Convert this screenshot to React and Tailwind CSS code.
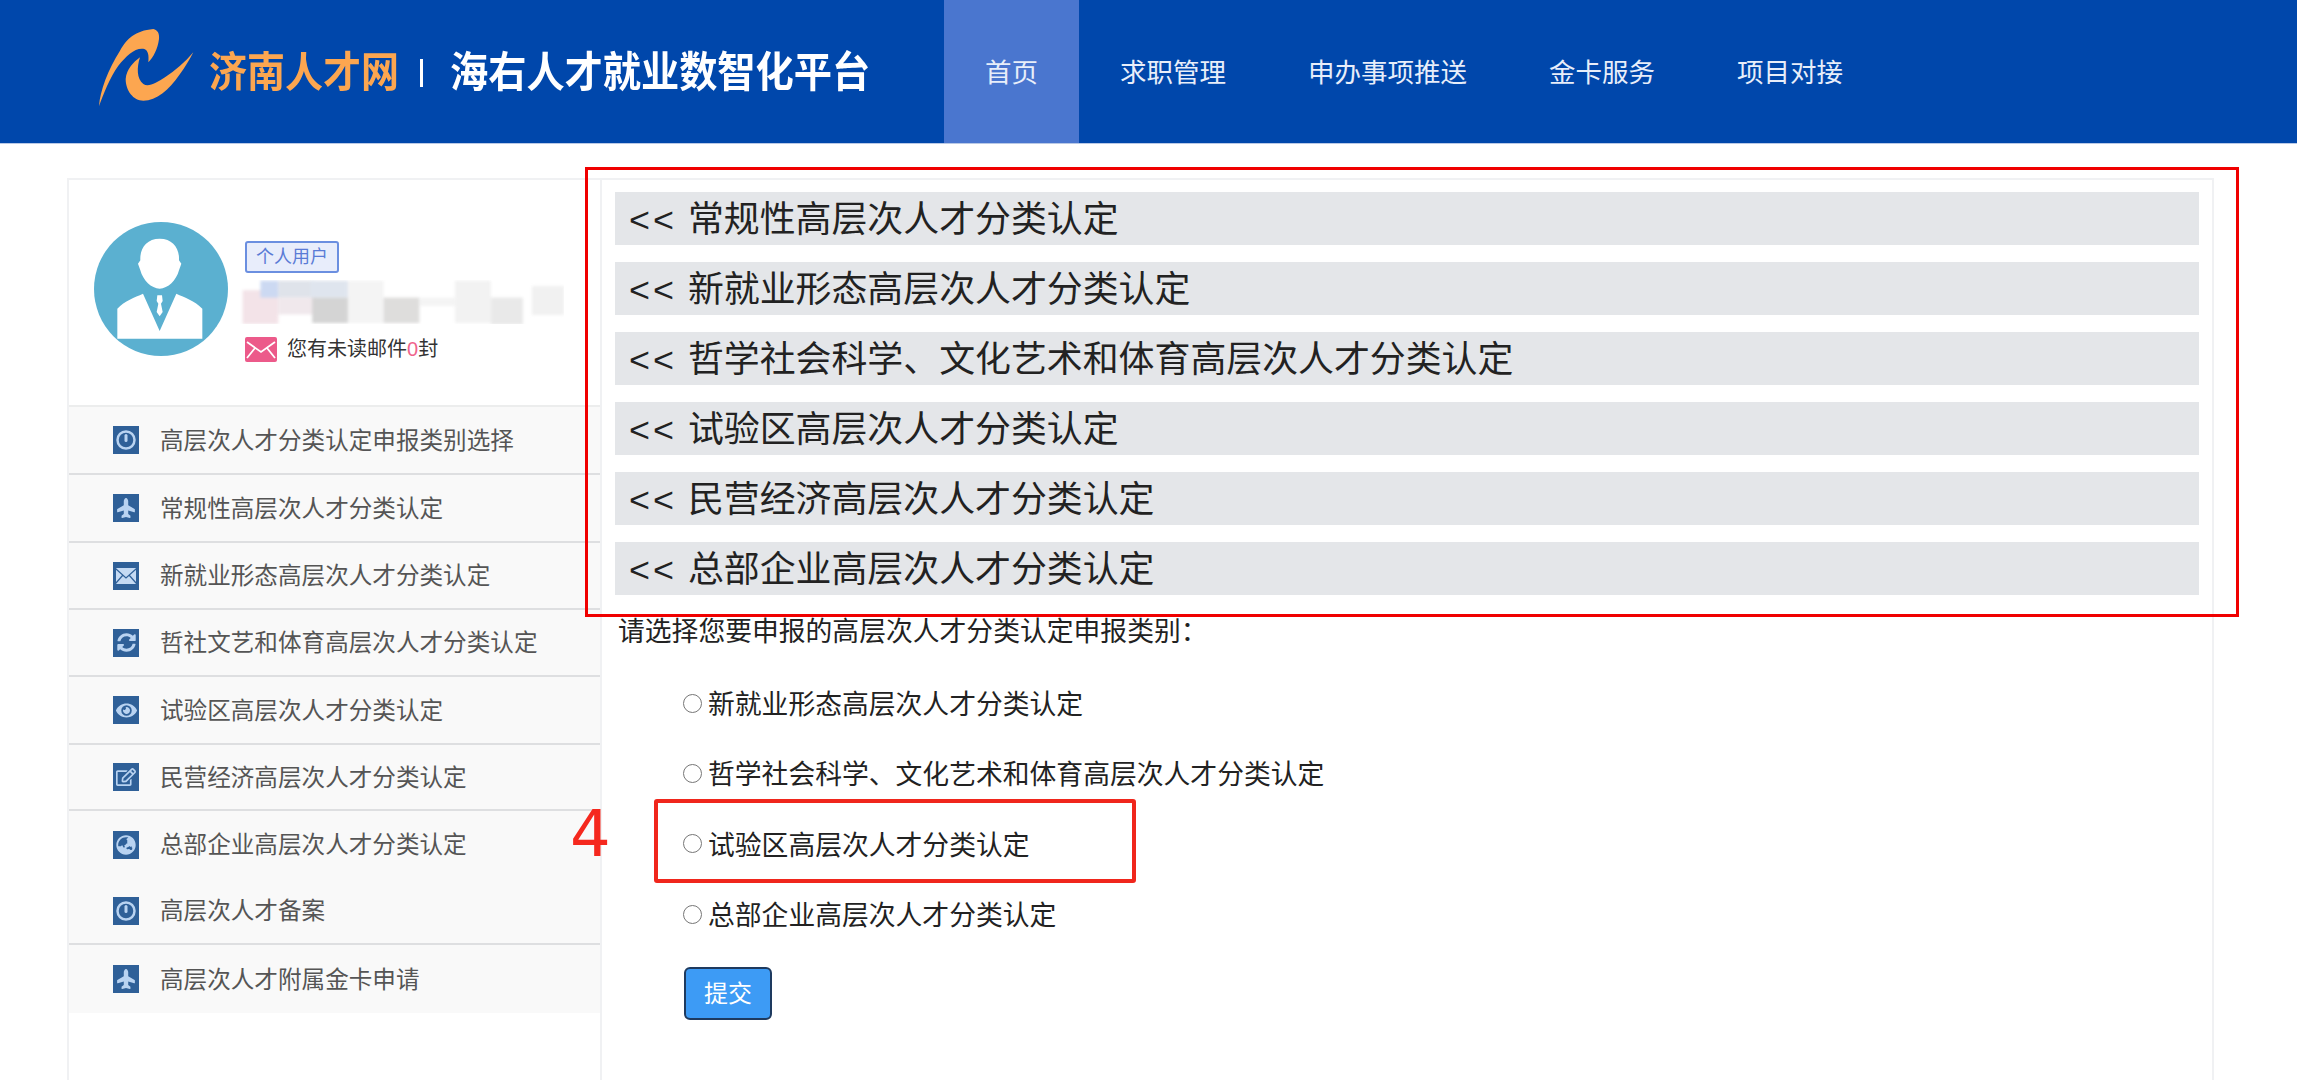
import React from "react";
import { FaPlane, FaSyncAlt, FaEye, FaRegEdit, FaGlobeAsia } from "react-icons/fa";

const PowerGlyph = () => (
  <svg viewBox="0 0 26 28" className="w-[26px] h-[28px]">
    <circle cx="13" cy="14" r="8.5" fill="none" stroke="#b9d3f1" strokeWidth="2.5" />
    <rect x="11.5" y="8" width="3" height="8" rx="1.5" fill="#b9d3f1" />
  </svg>
);

const MailGlyph = () => (
  <svg viewBox="0 0 26 28" className="w-[26px] h-[28px]">
    <rect x="3" y="6" width="20" height="16" rx="1" fill="#c5daf3" />
    <path d="M3 7l10 9 10-9M3 21l7-8M23 21l-7-8" fill="none" stroke="#2f6098" strokeWidth="1.2" />
  </svg>
);

const PlaneGlyph = () => <FaPlane className="w-[20px] h-[20px] -rotate-90 text-[#b9d3f1]" />;

const menu = [
  { label: "高层次人才分类认定申报类别选择", icon: <PowerGlyph />, h: "h-[68px]", line: true },
  { label: "常规性高层次人才分类认定", icon: <PlaneGlyph />, h: "h-[68px]", line: true },
  { label: "新就业形态高层次人才分类认定", icon: <MailGlyph />, h: "h-[67px]", line: true },
  { label: "哲社文艺和体育高层次人才分类认定", icon: <FaSyncAlt className="w-[19px] h-[19px] text-[#b9d3f1]" />, h: "h-[67px]", line: true },
  { label: "试验区高层次人才分类认定", icon: <FaEye className="w-[21px] h-[21px] text-[#b9d3f1]" />, h: "h-[68px]", line: true },
  { label: "民营经济高层次人才分类认定", icon: <FaRegEdit className="w-[20px] h-[20px] text-[#b9d3f1]" />, h: "h-[66px]", line: true },
  { label: "总部企业高层次人才分类认定", icon: <FaGlobeAsia className="w-[20px] h-[20px] text-[#b9d3f1]" />, h: "h-[67px]", line: false },
  { label: "高层次人才备案", icon: <PowerGlyph />, h: "h-[67px]", line: true },
  { label: "高层次人才附属金卡申请", icon: <PlaneGlyph />, h: "h-[68px]", line: false },
];

const bars = [
  "常规性高层次人才分类认定",
  "新就业形态高层次人才分类认定",
  "哲学社会科学、文化艺术和体育高层次人才分类认定",
  "试验区高层次人才分类认定",
  "民营经济高层次人才分类认定",
  "总部企业高层次人才分类认定",
];

const options = [
  "新就业形态高层次人才分类认定",
  "哲学社会科学、文化艺术和体育高层次人才分类认定",
  "试验区高层次人才分类认定",
  "总部企业高层次人才分类认定",
];

const nav = ["首页", "求职管理", "申办事项推送", "金卡服务", "项目对接"];

const App = () => {
  return (
    <div className="relative h-[1080px] overflow-hidden bg-white [font-family:'Liberation_Sans','Noto_Sans_CJK_SC',sans-serif]">
      <header className="h-[144px] bg-[#0047ab] border-b border-[#b9c9e6] flex">
        <div className="w-[944px] pl-[85px] flex items-center">
          <svg viewBox="0 0 390 300" className="w-[130px] h-[100px] mt-[-6px] shrink-0">
            <path d="M42 262C45 215 70 150 105 95C125 60 150 35 205 30C218 32 224 45 222 60C218 90 205 115 190 130C192 110 190 95 178 90C150 85 125 110 100 140C75 175 55 225 42 262Z" fill="#fca650" />
            <path d="M165 115C145 130 125 150 122 180C122 215 145 245 175 245C215 245 250 215 285 165C300 145 315 120 325 100C300 130 270 155 240 175C215 192 190 205 175 195C155 180 155 145 165 115Z" fill="#fca650" />
          </svg>
          <span className="ml-[-6px] mt-[3px] text-[38px] font-bold text-[#fca650] whitespace-nowrap scale-y-110">济南人才网</span>
          <span className="ml-[21px] mt-[3px] w-[3px] h-[28px] bg-white"></span>
          <span className="ml-[27px] mt-[3px] text-[38.2px] font-bold text-white whitespace-nowrap scale-y-110">海右人才就业数智化平台</span>
        </div>
        <nav className="flex">
          {nav.map((item, i) => (
            <a
              key={item}
              className={`px-[41px] pt-[4px] flex items-center text-[26.5px] text-[#e8eefa] whitespace-nowrap ${i === 0 ? "bg-[#4a76cf]" : ""}`}
            >
              {item}
            </a>
          ))}
        </nav>
      </header>

      <div className="pt-[34px] pl-[67px] pr-[83px]">
        <div className="h-[920px] flex border-2 border-b-0 border-[#f0f1f3]">
          <aside className="w-[533px] shrink-0 border-r-2 border-[#f0f1f3]">
            <div className="h-[225px] flex pl-[25px] pt-[42px] relative">
              <svg viewBox="28 35 402 402" className="w-[134px] h-[134px] shrink-0">
                <circle cx="229" cy="236" r="201" fill="#5bb0d0" />
                <path d="M225 85C265 85 285 115 283 150L290 160L283 180C275 210 250 235 225 235C200 235 175 210 167 180L160 160L167 150C165 115 185 85 225 85Z" fill="#fff" />
                <path d="M98 295C120 270 150 262 175 250L225 362L275 250C300 262 330 270 353 295V385H98Z" fill="#fff" />
                <path d="M218 255H232L234 272L229 280L234 305L225 318L216 305L221 280L216 272Z" fill="#fff" />
              </svg>
              <div className="ml-[17px] pt-[19px]">
                <span className="block w-[94px] h-[32px] border-2 border-[#6b8fe0] rounded-[3px] bg-[#e8edfb] text-[18px] leading-[28px] text-center text-[#5a7bd6]">
                  个人用户
                </span>
                <svg viewBox="500 310 910 130" preserveAspectRatio="none" className="w-[325px] h-[44px] mt-[7px] -ml-[6px] block">
                  <g style={{ filter: "blur(4px)" }}>
                    <rect x="510" y="340" width="100" height="100" fill="#f3e3e8" />
                    <rect x="560" y="312" width="50" height="50" fill="#ccd9f2" />
                    <rect x="610" y="312" width="100" height="50" fill="#dfe3ea" />
                    <rect x="700" y="312" width="105" height="50" fill="#dfe5ee" />
                    <rect x="610" y="362" width="100" height="50" fill="#f0e8ec" />
                    <rect x="705" y="362" width="100" height="75" fill="#d4d4d4" />
                    <rect x="805" y="312" width="100" height="125" fill="#f4f4f4" />
                    <rect x="905" y="362" width="100" height="75" fill="#dedddc" />
                    <rect x="1005" y="362" width="100" height="25" fill="#f4f4f4" />
                    <rect x="1105" y="312" width="100" height="125" fill="#f2f2f2" />
                    <rect x="1205" y="362" width="90" height="80" fill="#e9e9e9" />
                    <rect x="1320" y="328" width="90" height="85" fill="#f1f1f1" />
                  </g>
                </svg>
                <div className="flex items-center mt-[10px]">
                  <svg viewBox="0 0 32 25" className="w-[32px] h-[25px] shrink-0">
                    <rect width="32" height="25" rx="2" fill="#ec5a8a" />
                    <path d="M2 5L16 15L30 5M2 21L10 11M30 21L22 11" fill="none" stroke="#fff" strokeWidth="1.8" />
                  </svg>
                  <span className="ml-[10px] text-[20px] text-[#333] whitespace-nowrap">
                    您有未读邮件<span className="text-[#f0648c]">0</span>封
                  </span>
                </div>
              </div>
            </div>
            <ul className="border-t-2 border-[#eceded]">
              {menu.map((m) => (
                <li
                  key={m.label}
                  className={`${m.h} flex items-center pl-[44px] bg-[#f9f9f9] ${m.line ? "border-b-2 border-[#dedfe1]" : ""}`}
                >
                  <span className="w-[26px] h-[28px] bg-[#2f6098] flex items-center justify-center shrink-0">{m.icon}</span>
                  <span className="ml-[21px] pt-[3px] text-[23.6px] text-[#555] whitespace-nowrap">{m.label}</span>
                </li>
              ))}
            </ul>
          </aside>

          <main className="flex-1 pt-[12px] px-[13px]">
            {bars.map((b) => (
              <div key={b} className="h-[53px] mb-[17px] pt-[5px] bg-[#e4e6e9] flex items-center pl-[14px] text-[35.9px] text-[#222] whitespace-nowrap">
                <span className="mr-[11px] tracking-[3px]">&lt;&lt;</span>
                {b}
              </div>
            ))}
            <p className="h-[35px] flex items-center mt-[20px] pl-[3px] text-[26.8px] text-[#222] whitespace-nowrap">
              请选择您要申报的高层次人才分类认定申报类别：
            </p>
            <div className="mt-[20px] pl-[68px]">
              {options.map((o) => (
                <label key={o} className="h-[70.3px] flex items-center text-[26.8px] text-[#222] whitespace-nowrap">
                  <input type="radio" name="kind" className="w-[19px] h-[19px] m-0 mr-[6px] shrink-0 -mt-[4px]" />
                  {o}
                </label>
              ))}
            </div>
            <button className="mt-[16px] ml-[69px] w-[88px] h-[53px] rounded-[6px] bg-[#3d9bf5] border-2 border-[#1e3a5f] text-[24px] text-white">
              提交
            </button>
          </main>
        </div>
      </div>

      {/* red annotations drawn over the page */}
      <div className="absolute left-[585px] top-[167px] w-[1654px] h-[450px] border-[3px] border-[#f00000]"></div>
      <div className="absolute left-[654px] top-[799px] w-[482px] h-[84px] border-[4px] border-[#f0261c] rounded-[3px]"></div>
      <span className="absolute left-[570px] top-[796px] text-[64px] leading-[76px] text-[#f5281e] [font-family:'DejaVu_Sans',sans-serif]">4</span>
    </div>
  );
};

export default App;
